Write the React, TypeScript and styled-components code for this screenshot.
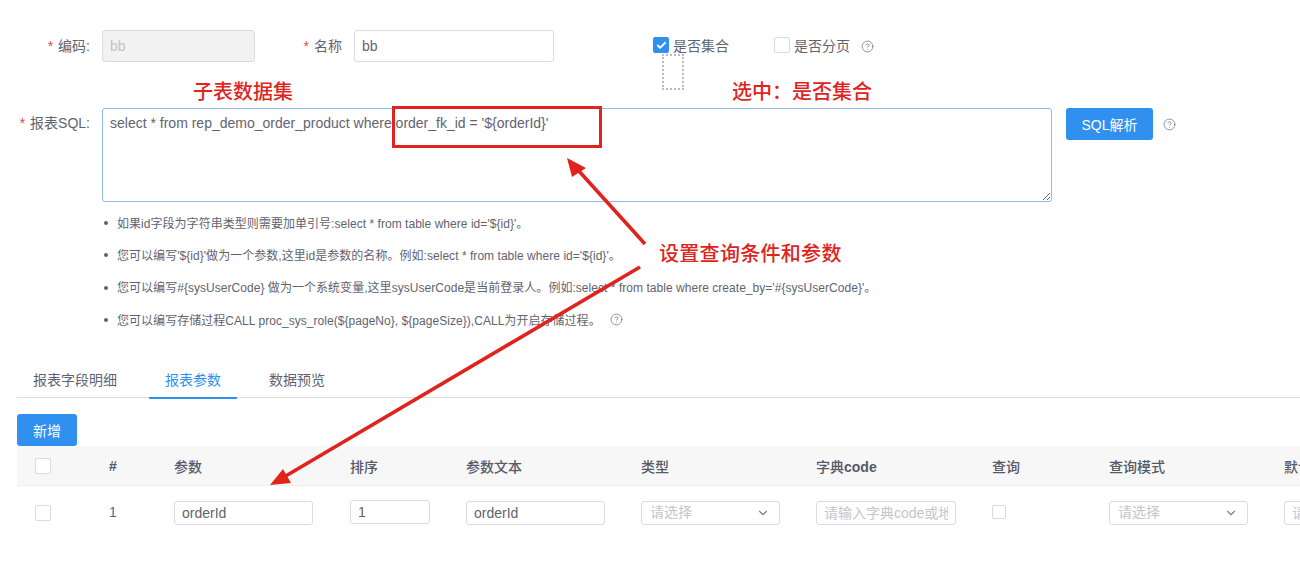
import React from "react";
import styled, { createGlobalStyle } from "styled-components";
import { CircleHelp, ChevronDown, Check } from "lucide-react";

const Global = createGlobalStyle`
  html, body { margin: 0; padding: 0; background: #fff; }
  body { font-family: "Liberation Sans", "Noto Sans CJK SC", sans-serif; font-size: 14px; color: #5f6371; }
  * { box-sizing: border-box; }
`;

const FONT = `"Liberation Sans", "Noto Sans CJK SC", sans-serif`;

const Page = styled.div`
  position: relative;
  width: 1300px;
  height: 571px;
  overflow: hidden;
  padding-top: 30px;
`;
const Row = styled.div`
  display: flex;
  align-items: center;
  height: 32px;
`;
const SqlRow = styled.div`
  display: flex;
  align-items: flex-start;
  margin-top: 46px;
`;
const Label = styled.label<{ $w: number }>`
  width: ${(p) => p.$w}px;
  margin-right: 12px;
  text-align: right;
  line-height: 31px;
  flex: none;
  white-space: nowrap;
`;
const Star = styled.span`
  color: #e5484d;
  margin-right: 5px;
  font-size: 14px;
`;
const TextInput = styled.input<{ $w: number }>`
  width: ${(p) => p.$w}px;
  height: 32px;
  padding: 0 7px;
  border: 1px solid #d9dbe0;
  border-radius: 3px;
  font: 14px ${FONT};
  color: #5f6371;
  background: #fff;
  outline: none;
  flex: none;
  &:disabled { background: #f2f2f2; color: #c3c3c3; }
`;
const CheckGroup = styled.div<{ $ml: number }>`
  display: flex;
  align-items: center;
  gap: 4px;
  margin-left: ${(p) => p.$ml}px;
  margin-bottom: 2px;
`;
const Box = styled.span<{ $on?: boolean; $size?: number }>`
  width: ${(p) => p.$size ?? 16}px;
  height: ${(p) => p.$size ?? 16}px;
  border-radius: 2px;
  border: 1px solid ${(p) => (p.$on ? "#3090f0" : "#d9dbe0")};
  background: ${(p) => (p.$on ? "#3090f0" : "#fff")};
  display: inline-flex;
  align-items: center;
  justify-content: center;
  color: #fff;
  flex: none;
`;
const Help = styled(CircleHelp)<{ $ml: number }>`
  width: 13px;
  height: 13px;
  margin-left: ${(p) => p.$ml}px;
  color: #6d7180;
  stroke-width: 1.4;
  flex: none;
`;
const SqlArea = styled.textarea`
  width: 950px;
  height: 94px;
  padding: 5px 7px;
  border: 1px solid #8dbcec;
  border-radius: 3px;
  font: 14px/1.3 ${FONT};
  color: #5f6371;
  outline: none;
  flex: none;
  resize: vertical;
`;
const Primary = styled.button<{ $w: number }>`
  width: ${(p) => p.$w}px;
  height: 32px;
  border: 0;
  border-radius: 3px;
  background: #3090f0;
  color: #fff;
  font: 14px ${FONT};
  padding: 0 0 1px;
  flex: none;
`;
const SqlButton = styled(Primary)`
  margin-left: 14px;
`;
const SqlHelp = styled.span`
  display: flex;
  height: 32px;
  align-items: center;
`;
const Hints = styled.ul`
  list-style: none;
  margin: 4px 0 0;
  padding: 0 0 0 104px;
`;
const Hint = styled.li`
  display: flex;
  align-items: center;
  height: 32.33px;
  font-size: 12px;
  letter-spacing: 0.04px;
  white-space: nowrap;
  &::before {
    content: "";
    width: 4px;
    height: 4px;
    border-radius: 50%;
    background: #5f6371;
    margin-right: 9px;
    margin-top: 2px;
  }
`;
const Tabs = styled.div`
  display: flex;
  margin: 27px 0 0 17px;
  height: 36px;
  border-bottom: 1px solid #dcdde0;
`;
const Tab = styled.div<{ $on?: boolean; $first?: boolean }>`
  width: ${(p) => (p.$first ? "116px" : "88px")};
  margin-right: 16px;
  padding-left: ${(p) => (p.$first ? "16px" : "0")};
  text-align: ${(p) => (p.$first ? "left" : "center")};
  line-height: 36px;
  height: 37px;
  color: ${(p) => (p.$on ? "#3090f0" : "#5f6371")};
  border-bottom: 2px solid ${(p) => (p.$on ? "#3090f0" : "transparent")};
`;
const AddWrap = styled.div`
  margin: 16px 0 0 17px;
`;
const COLS = "92px 65px 176px 116px 175px 175px 176px 117px 175px 100px";
const HeadRow = styled.div`
  display: grid;
  grid-template-columns: ${COLS};
  align-items: center;
  margin-left: 17px;
  height: 40px;
  background: #f7f7f7;
  border-bottom: 1px solid #eeeeee;
  font-weight: 500;
  font-size: 14px;
  color: #555a68;
`;
const BodyRow = styled.div`
  display: grid;
  grid-template-columns: ${COLS};
  align-items: center;
  margin-left: 17px;
  height: 54px;
`;
const BoxCell = styled.div`
  padding-left: 18px;
  display: flex;
`;
const Cell = styled.div`
  white-space: nowrap;
`;
const IndexCell = styled.div`
  margin-top: -2px;
`;
const StrongLatin = styled.span`
  font-weight: 700;
`;
const CellInput = styled.input<{ $w: number; $up?: boolean }>`
  display: block;
  width: ${(p) => p.$w}px;
  height: 24px;
  padding: 0 7px;
  margin-top: ${(p) => (p.$up ? "-2px" : "0")};
  border: 1px solid #d9dbe0;
  border-radius: 3px;
  font: 14px ${FONT};
  color: #5f6371;
  outline: none;
  &::placeholder { color: #c4c6cc; }
`;
const Select = styled.div<{ $w: number }>`
  width: ${(p) => p.$w}px;
  height: 24px;
  padding: 0 9px 3px 8px;
  margin-top: -1px;
  border: 1px solid #d9dbe0;
  border-radius: 3px;
  display: flex;
  align-items: center;
  justify-content: space-between;
  color: #c4c6cc;
  font-size: 14px;
`;
const Chevron = styled(ChevronDown)`
  width: 14px;
  height: 14px;
  color: #7c808c;
  margin-top: 3px;
`;
const Annotation = styled.div<{ $x: number; $y: number; $ls?: number }>`
  position: absolute;
  left: ${(p) => p.$x}px;
  top: ${(p) => p.$y}px;
  color: #e0231c;
  font-size: 20px;
  font-weight: 500;
  line-height: 28px;
  letter-spacing: ${(p) => p.$ls ?? 0}px;
  white-space: nowrap;
`;
const RedBox = styled.div`
  position: absolute;
  left: 392px;
  top: 106px;
  width: 210px;
  height: 42px;
  border: 3px solid #e0231c;
`;
const Dotted = styled.div`
  position: absolute;
  left: 662px;
  top: 54px;
  width: 22px;
  height: 36px;
  border: 2px dotted #bcbcbc;
`;
const ArrowLayer = styled.svg`
  position: absolute;
  left: 0;
  top: 0;
  pointer-events: none;
`;

export default function App() {
  return (
    <Page>
      <Global />
      <Row>
        <Label $w={90}><Star>*</Star>编码:</Label>
        <TextInput $w={153} disabled value="bb" readOnly />
        <Label $w={87}><Star>*</Star>名称</Label>
        <TextInput $w={200} value="bb" readOnly />
        <CheckGroup $ml={99}>
          <Box $on><Check size={11} strokeWidth={4} /></Box>是否集合
        </CheckGroup>
        <CheckGroup $ml={45}>
          <Box />是否分页
        </CheckGroup>
        <Help $ml={11} />
      </Row>
      <SqlRow>
        <Label $w={90}><Star>*</Star>报表SQL:</Label>
        <SqlArea readOnly value={"select * from rep_demo_order_product where order_fk_id = '${orderId}'"} />
        <SqlButton $w={87}>SQL解析</SqlButton>
        <SqlHelp><Help $ml={10} /></SqlHelp>
      </SqlRow>
      <Hints>
        <Hint>如果id字段为字符串类型则需要加单引号:select * from table where id='${"{id}"}'。</Hint>
        <Hint>您可以编写'${"{id}"}'做为一个参数,这里id是参数的名称。例如:select * from table where id='${"{id}"}'。</Hint>
        <Hint>您可以编写#{"{sysUserCode}"} 做为一个系统变量,这里sysUserCode是当前登录人。例如:select * from table where create_by='#{"{sysUserCode}"}'。</Hint>
        <Hint>您可以编写存储过程CALL proc_sys_role(${"{pageNo}"}, ${"{pageSize}"}),CALL为开启存储过程。<Help $ml={9} /></Hint>
      </Hints>
      <Tabs>
        <Tab $first>报表字段明细</Tab>
        <Tab $on>报表参数</Tab>
        <Tab>数据预览</Tab>
      </Tabs>
      <AddWrap><Primary $w={60}>新增</Primary></AddWrap>
      <HeadRow>
        <BoxCell><Box /></BoxCell>
        <Cell><StrongLatin>#</StrongLatin></Cell>
        <Cell>参数</Cell>
        <Cell>排序</Cell>
        <Cell>参数文本</Cell>
        <Cell>类型</Cell>
        <Cell>字典<StrongLatin>code</StrongLatin></Cell>
        <Cell>查询</Cell>
        <Cell>查询模式</Cell>
        <Cell>默认值</Cell>
      </HeadRow>
      <BodyRow>
        <BoxCell><Box /></BoxCell>
        <IndexCell>1</IndexCell>
        <Cell><CellInput $w={139} value="orderId" readOnly /></Cell>
        <Cell><CellInput $w={80} $up value="1" readOnly /></Cell>
        <Cell><CellInput $w={139} value="orderId" readOnly /></Cell>
        <Cell><Select $w={139}>请选择<Chevron /></Select></Cell>
        <Cell><CellInput $w={140} placeholder="请输入字典code或地址" /></Cell>
        <Cell><Box $size={14} /></Cell>
        <Cell><Select $w={139}>请选择<Chevron /></Select></Cell>
        <Cell><CellInput $w={139} placeholder="请输入" /></Cell>
      </BodyRow>

      <Annotation $x={193} $y={78}>子表数据集</Annotation>
      <Annotation $x={732} $y={78}>选中：是否集合</Annotation>
      <Annotation $x={659} $y={240} $ls={0.3}>设置查询条件和参数</Annotation>
      <RedBox />
      <Dotted />
      <ArrowLayer width="1300" height="571" viewBox="0 0 1300 571">
        <line x1="645" y1="244" x2="578" y2="170" stroke="#e0231c" strokeWidth="3.6" />
        <polygon points="567,158 586,168 572,177" fill="#e0231c" />
        <line x1="640" y1="267" x2="284" y2="477" stroke="#e0231c" strokeWidth="3.6" />
        <polygon points="270,485 283,469 291,483" fill="#e0231c" />
      </ArrowLayer>
    </Page>
  );
}
